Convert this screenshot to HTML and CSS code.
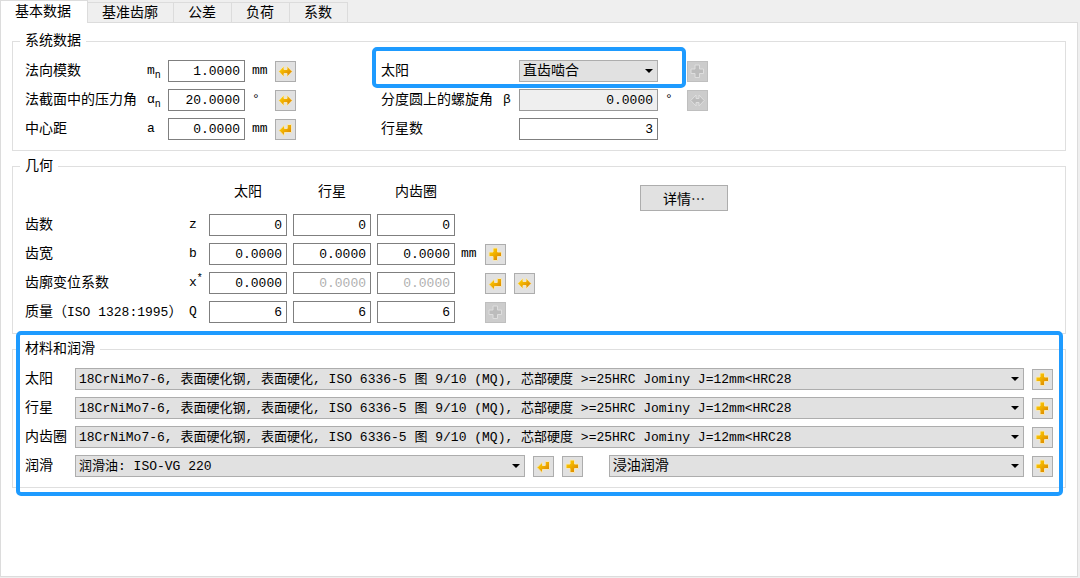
FILE: index.html
```
<!DOCTYPE html>
<html lang="zh-CN">
<head>
    <meta charset="UTF-8">
    <meta name="viewport" content="width=device-width, initial-scale=1.0">
    <title>基本数据</title>
    <link rel="stylesheet" href="styles.css">
</head>
<body>
    <!-- icons shared by the small buttons -->
    <svg class="icon-defs" width="0" height="0" aria-hidden="true">
        <linearGradient id="gold" x1="0" y1="0" x2="1" y2="1">
            <stop offset="0.2" stop-color="#fcc800"/>
            <stop offset="0.9" stop-color="#d98200"/>
        </linearGradient>
        <symbol id="plus" viewBox="0 0 15 15">
            <path d="M5 1h4.5v4h4v4.500h-4v4H5v-4H1V5h4z"/>
        </symbol>
        <symbol id="swap" viewBox="0 0 15 15">
            <path d="M0.800 7.500L6 2V5.500H9V2L14.200 7.500L9 13V9.500H6V13z"/>
        </symbol>
        <symbol id="enter" viewBox="0 0 15 15">
            <path d="M1 8.500L6.500 3V6.500H9.200V2.500H13.500V10.500H6.500V14z"/>
        </symbol>
    </svg>

    <div class="tabs" role="tablist">
        <button type="button" class="tab active" role="tab" aria-selected="true">基本数据</button>
        <button type="button" class="tab" role="tab">基准齿廓</button>
        <button type="button" class="tab" role="tab">公差</button>
        <button type="button" class="tab" role="tab">负荷</button>
        <button type="button" class="tab" role="tab">系数</button>
    </div>

    <form class="panel">
        <fieldset>
            <legend>系统数据</legend>
            <div class="system">
                <div class="system-left">
                    <label for="mn">法向模数</label>
                    <span class="symbol">m<sub>n</sub></span>
                    <input type="text" id="mn" value="1.0000">
                    <span class="unit">mm</span>
                    <button type="button" class="icon-btn" aria-label="换算"><svg><use href="#swap"/></svg></button>

                    <label for="alpha">法截面中的压力角</label>
                    <span class="symbol">α<sub>n</sub></span>
                    <input type="text" id="alpha" value="20.0000">
                    <span class="unit">°</span>
                    <button type="button" class="icon-btn" aria-label="换算"><svg><use href="#swap"/></svg></button>

                    <label for="center">中心距</label>
                    <span class="symbol">a</span>
                    <input type="text" id="center" value="0.0000">
                    <span class="unit">mm</span>
                    <button type="button" class="icon-btn" aria-label="计算"><svg><use href="#enter"/></svg></button>
                </div>

                <div class="system-right">
                    <label for="sun-type" class="wide">太阳</label>
                    <span class="select">
                        <select id="sun-type"><option>直齿啮合</option></select>
                    </span>
                    <span></span>
                    <button type="button" class="icon-btn" aria-label="添加" disabled><svg><use href="#plus"/></svg></button>

                    <label for="beta">分度圆上的螺旋角</label>
                    <span class="symbol">β</span>
                    <input type="text" id="beta" class="locked" value="0.0000" readonly>
                    <span class="unit">°</span>
                    <button type="button" class="icon-btn" aria-label="换算" disabled><svg><use href="#swap"/></svg></button>

                    <label for="planets" class="wide">行星数</label>
                    <input type="text" id="planets" value="3">
                    <div class="highlight highlight-row"></div>
                </div>
            </div>
        </fieldset>

        <fieldset>
            <legend>几何</legend>
            <div class="geometry">
                <div class="geometry-grid">
                    <span class="head head-first" id="h-sun">太阳</span>
                    <span class="head" id="h-planet">行星</span>
                    <span class="head" id="h-ring">内齿圈</span>

                    <label for="z1" id="l-z">齿数</label>
                    <span class="symbol">z</span>
                    <input type="text" id="z1" value="0" aria-labelledby="l-z h-sun">
                    <input type="text" value="0" aria-labelledby="l-z h-planet">
                    <input type="text" value="0" aria-labelledby="l-z h-ring">

                    <label for="b1" id="l-b">齿宽</label>
                    <span class="symbol">b</span>
                    <input type="text" id="b1" value="0.0000" aria-labelledby="l-b h-sun">
                    <input type="text" value="0.0000" aria-labelledby="l-b h-planet">
                    <input type="text" value="0.0000" aria-labelledby="l-b h-ring">
                    <span class="unit">mm</span>
                    <span class="actions">
                        <button type="button" class="icon-btn" aria-label="添加"><svg><use href="#plus"/></svg></button>
                    </span>

                    <label for="x1" id="l-x">齿廓变位系数</label>
                    <span class="symbol">x<sup>*</sup></span>
                    <input type="text" id="x1" value="0.0000" aria-labelledby="l-x h-sun">
                    <input type="text" value="0.0000" aria-labelledby="l-x h-planet" disabled>
                    <input type="text" value="0.0000" aria-labelledby="l-x h-ring" disabled>
                    <span class="actions">
                        <button type="button" class="icon-btn" aria-label="计算"><svg><use href="#enter"/></svg></button>
                        <button type="button" class="icon-btn" aria-label="换算"><svg><use href="#swap"/></svg></button>
                    </span>

                    <label for="q1" id="l-q">质量（<span class="latin">ISO 1328:1995</span>）</label>
                    <span class="symbol">Q</span>
                    <input type="text" id="q1" value="6" aria-labelledby="l-q h-sun">
                    <input type="text" value="6" aria-labelledby="l-q h-planet">
                    <input type="text" value="6" aria-labelledby="l-q h-ring">
                    <span class="actions">
                        <button type="button" class="icon-btn" aria-label="添加" disabled><svg><use href="#plus"/></svg></button>
                    </span>
                </div>
                <button type="button" class="details-btn">详情…</button>
            </div>
        </fieldset>

        <div class="material-wrap">
            <fieldset>
                <legend>材料和润滑</legend>
                <div class="materials">
                    <div class="material-row">
                        <label for="mat-sun">太阳</label>
                        <span class="select mixed">
                            <select id="mat-sun"><option>18CrNiMo7-6, 表面硬化钢, 表面硬化, ISO 6336-5 图 9/10 (MQ), 芯部硬度 &gt;=25HRC Jominy J=12mm&lt;HRC28</option></select>
                        </span>
                        <button type="button" class="icon-btn" aria-label="添加"><svg><use href="#plus"/></svg></button>
                    </div>
                    <div class="material-row">
                        <label for="mat-planet">行星</label>
                        <span class="select mixed">
                            <select id="mat-planet"><option>18CrNiMo7-6, 表面硬化钢, 表面硬化, ISO 6336-5 图 9/10 (MQ), 芯部硬度 &gt;=25HRC Jominy J=12mm&lt;HRC28</option></select>
                        </span>
                        <button type="button" class="icon-btn" aria-label="添加"><svg><use href="#plus"/></svg></button>
                    </div>
                    <div class="material-row">
                        <label for="mat-ring">内齿圈</label>
                        <span class="select mixed">
                            <select id="mat-ring"><option>18CrNiMo7-6, 表面硬化钢, 表面硬化, ISO 6336-5 图 9/10 (MQ), 芯部硬度 &gt;=25HRC Jominy J=12mm&lt;HRC28</option></select>
                        </span>
                        <button type="button" class="icon-btn" aria-label="添加"><svg><use href="#plus"/></svg></button>
                    </div>
                    <div class="material-row">
                        <label for="oil">润滑</label>
                        <span class="select mixed oil">
                            <select id="oil"><option>润滑油: ISO-VG 220</option></select>
                        </span>
                        <span class="actions oil-actions">
                            <button type="button" class="icon-btn" aria-label="计算"><svg><use href="#enter"/></svg></button>
                            <button type="button" class="icon-btn" aria-label="添加"><svg><use href="#plus"/></svg></button>
                        </span>
                        <span class="select oil-type">
                            <select aria-label="润滑方式"><option>浸油润滑</option></select>
                        </span>
                        <button type="button" class="icon-btn" aria-label="添加"><svg><use href="#plus"/></svg></button>
                    </div>
                </div>
            </fieldset>
            <div class="highlight highlight-group"></div>
        </div>
    </form>
</body>
</html>
```

FILE: styles.css
```
* {
    box-sizing: border-box;
}

body {
    display: flex;
    flex-direction: column;
    min-height: 100vh;
    margin: 0;
    padding: 0 2px 1px 0;
    background-color: #efefef;
    color: #000;
    font-family: "Liberation Mono", "Noto Sans CJK SC", monospace;
    font-size: 14px;
    line-height: 18px;
}

input, select, button {
    margin: 0;
    font-family: inherit;
    font-size: 14px;
    color: #000;
}

.icon-defs {
    position: absolute;
}

/* Tabs */
.tabs {
    display: flex;
    align-items: flex-end;
    height: 22px;
}

.tab {
    height: 20px;
    padding: 0 15px 0 14px;
    border: 1px solid #dcdcdc;
    border-left: none;
    border-bottom: none;
    background-color: #efefef;
    line-height: 18px;
    white-space: nowrap;
}

.tab.active {
    position: relative;
    height: 23px;
    padding: 0 16px 0 14px;
    margin-bottom: -1px;
    border-left: 1px solid #dcdcdc;
    background-color: #fff;
}

.panel {
    flex: 1;
    padding: 9px 11px 12px;
    border: 1px solid #dcdcdc;
    background-color: #fff;
}

/* Groups */
fieldset {
    min-width: 0;
    margin: 0 0 6px;
    padding: 10px 12px;
    border: 1px solid #dfdfdf;
}

legend {
    margin-left: -5px;
    padding: 0 5px;
    height: 18px;
}

label {
    white-space: nowrap;
}

input[type="text"] {
    width: 100%;
    height: 22px;
    padding: 1px 4px 0;
    border: 1px solid #7f7f7f;
    background-color: #fff;
    font-size: 13px;
    text-align: right;
}

input[type="text"]:disabled {
    color: #b0b0b0;
}

input[type="text"].locked {
    border-color: #999;
    background-color: #efefef;
}

.symbol, .unit, .latin {
    font-size: 13px;
}

sub, sup {
    font-size: 10px;
    line-height: 0;
}

.unit {
    padding-left: 7px;
}

.select {
    position: relative;
    display: block;
}

.select select {
    display: block;
    width: 100%;
    height: 22px;
    padding: 0 20px 0 3px;
    border: 1px solid #adadad;
    border-radius: 0;
    background-color: #e1e1e1;
    appearance: none;
}

.select.mixed select {
    font-size: 13px;
}

.select::after {
    content: "";
    position: absolute;
    top: 9px;
    right: 5px;
    border: 4px solid transparent;
    border-top-color: #000;
    border-bottom: none;
    pointer-events: none;
}

.icon-btn {
    display: flex;
    flex: none;
    align-items: center;
    justify-content: center;
    width: 21px;
    height: 21px;
    padding: 0;
    border: 1px solid #adadad;
    background-color: #e1e1e1;
}

.icon-btn svg {
    width: 15px;
    height: 15px;
    fill: url(#gold);
    stroke: #f6e6b8;
    stroke-width: 1;
}

.icon-btn:disabled {
    border-color: #bfbfbf;
    background-color: #ccc;
}

.icon-btn:disabled svg {
    fill: #bcbcbc;
    stroke: #dedede;
}

.actions {
    display: flex;
    gap: 8px;
}

/* System data */
.system {
    display: flex;
    gap: 85px;
}

.system-left, .system-right {
    position: relative;
    display: grid;
    grid-auto-rows: 22px;
    row-gap: 7px;
    align-items: center;
}

.system-left {
    grid-template-columns: 122px 21px 77px 30px 21px;
}

.system-right {
    grid-template-columns: 122px 16px 139px 29px 21px;
}

.wide {
    grid-column: 1 / 3;
}

/* Geometry */
.geometry {
    display: flex;
    align-items: flex-start;
    gap: 105px;
}

.geometry-grid {
    display: grid;
    grid-template-columns: 158px 14px 78px 78px 78px 18px 50px;
    grid-auto-rows: 22px;
    gap: 7px 6px;
    align-items: center;
}

.geometry-grid label,
.geometry-grid .symbol {
    margin-right: -6px;
}

.geometry-grid label {
    grid-column: 1;
}

.geometry-grid .unit {
    padding-left: 0;
}

.geometry-grid .actions {
    grid-column: 7;
}

.head {
    align-self: start;
    line-height: 14px;
    text-align: center;
}

.head-first {
    grid-column: 3;
}

.details-btn {
    width: 88px;
    height: 26px;
    border: 1px solid #adadad;
    background-color: #e1e1e1;
    font-family: "Noto Sans CJK SC", sans-serif;
}

/* Materials and lubrication */
.material-wrap {
    position: relative;
}

.material-wrap fieldset {
    margin-bottom: 0;
}

.materials {
    display: flex;
    flex-direction: column;
    gap: 7px;
}

.material-row {
    display: flex;
    align-items: center;
    gap: 8px;
}

.material-row label {
    width: 42px;
}

.material-row .select {
    flex: 1 1 0;
    min-width: 0;
}

.material-row .oil {
    flex-grow: 13;
}

.material-row .oil-type {
    flex-grow: 12;
}

.oil-actions {
    margin-right: 18px;
}

/* Blue frames drawn over the form */
.highlight {
    position: absolute;
    border: 4px solid #1e9bff;
    border-radius: 5px;
    pointer-events: none;
}

.highlight-row {
    top: -13px;
    left: -9px;
    right: 22px;
    height: 41px;
}

.highlight-group {
    top: -9px;
    right: 3px;
    bottom: -8px;
    left: 4px;
}
```
